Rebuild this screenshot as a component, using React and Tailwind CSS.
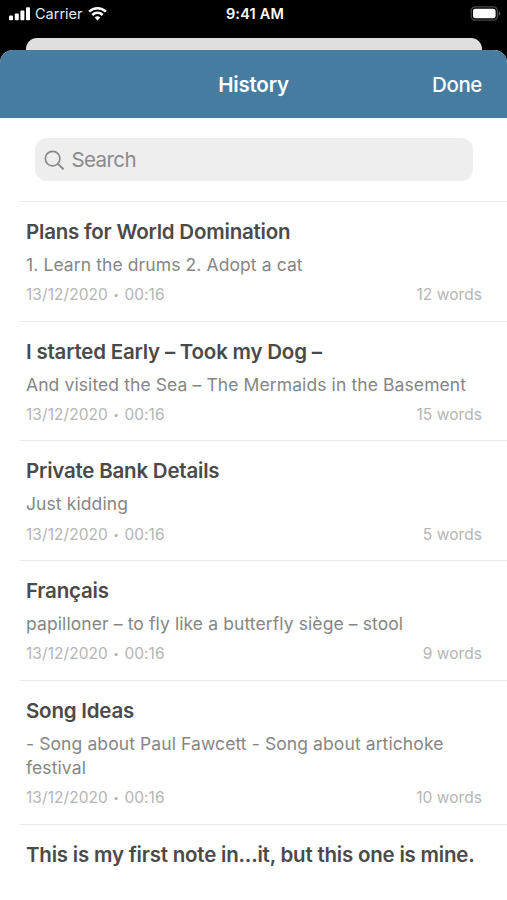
const notes = [
  {
    title: 'Plans for World Domination',
    body: '1. Learn the drums 2. Adopt a cat',
    words: 12,
  },
  {
    title: 'I started Early – Took my Dog –',
    body: 'And visited the Sea – The Mermaids in the Basement',
    words: 15,
  },
  { title: 'Private Bank Details', body: 'Just kidding', words: 5 },
  {
    title: 'Français',
    body: 'papilloner – to fly like a butterfly siège – stool',
    words: 9,
  },
  {
    title: 'Song Ideas',
    body: '- Song about Paul Fawcett - Song about artichoke festival',
    words: 10,
  },
  { title: 'This is my first note in...it, but this one is mine.' },
];

const StatusBar = () => (
  <div className="grid grid-cols-3 items-center h-[27px] pl-[9px] pr-[6px] text-white">
    <div className="flex items-center">
      <svg width="22" height="14" viewBox="0 0 22 14" fill="currentColor">
        <rect x="0" y="8.6" width="4" height="4.6" rx="1" />
        <rect x="5.8" y="6.5" width="4" height="6.7" rx="1" />
        <rect x="11.4" y="3.4" width="4" height="9.8" rx="1" />
        <rect x="17" y="0.2" width="4" height="13" rx="1" />
      </svg>
      <span className="ml-1 text-[14.5px] tracking-[0px] text-gray-200">Carrier</span>
      <svg className="ml-[5px]" width="19" height="14" viewBox="0 0 19 14" fill="none" stroke="currentColor" strokeWidth="2.5">
        <path d="M1.1 4.7a12 12 0 0 1 16.8 0" />
        <path d="M4.3 8a7.4 7.4 0 0 1 10.4 0" />
        <path d="M9.5 13.4 6.7 10.6a4 4 0 0 1 5.6 0Z" fill="currentColor" stroke="none" />
      </svg>
    </div>
    <span className="text-center text-[14.5px] font-semibold tracking-[0.2px]">9:41 AM</span>
    <svg className="justify-self-end" width="31" height="15" viewBox="0 0 31 15">
      <rect x="1.2" y="0.9" width="26.2" height="13.2" rx="4" fill="none" stroke="#48484a" strokeWidth="1.3" />
      <rect x="3" y="2.7" width="22.6" height="9.6" rx="2.2" fill="#fff" />
      <path d="M28.8 5.2v4.6c1-.4 1.6-1.3 1.6-2.3s-.6-1.9-1.6-2.3Z" fill="#5c5c5e" />
    </svg>
  </div>
);

const NoteRow = ({ note }) => (
  <li className="ml-5 border-t border-[#e9e9e9] pl-[6px] pr-[25px] pt-4 pb-[15.4px]">
    <h2 className="text-[20.5px] leading-7 font-semibold tracking-[-0.21px] text-[#4a4a4a] whitespace-nowrap">
      {note.title}
    </h2>
    {note.body && (
      <>
        <p className="mt-[7px] text-[17.5px] leading-[24.3px] tracking-[0.1px] text-[#868686]">{note.body}</p>
        <div className="mt-2 flex justify-between text-[15.5px] leading-5 tracking-[0.06px] text-[#b5b5b5]">
          <div className="flex">
            <span>13/12/2020</span>
            <span className="w-[16.5px] text-center text-[10px] leading-[18px]">•</span>
            <span>00:16</span>
          </div>
          <span>{note.words} words</span>
        </div>
      </>
    )}
  </li>
);

const App = () => (
  <div className="h-[900px] w-[507px] overflow-hidden bg-black font-['Inter',sans-serif]">
    <StatusBar />
    {/* edge of the screen behind the sheet */}
    <div className="mt-[11px] ml-[26px] mr-[25px] h-3 rounded-t-[11px] bg-[#dfdfdf]" />
    <div className="h-[850px] overflow-hidden rounded-t-[13px] bg-white">
      <header className="grid grid-cols-3 items-center h-[68px] pt-[2px] px-[25px] bg-[#467ca0] text-white">
        <h1 className="col-start-2 text-center text-[20.5px] font-semibold tracking-[-0.2px]">History</h1>
        <button className="justify-self-end text-[20.5px] font-medium tracking-[-0.4px]">Done</button>
      </header>

      <div className="mt-5 ml-[35px] mr-[34px] flex items-center h-[43px] rounded-[12px] bg-[#eeeeee] pl-[9px] pt-px text-[#8a8a8d]">
        <svg width="21" height="21" viewBox="0 0 21 21" fill="none" stroke="currentColor" strokeWidth="1.7" strokeLinecap="round">
          <circle cx="8.6" cy="8.6" r="7.3" />
          <path d="m13.9 13.9 5.1 4.9" strokeWidth="2" />
        </svg>
        <span className="ml-[6.5px] pt-px text-[20.5px] tracking-[-0.6px]">Search</span>
      </div>

      <ul className="mt-5">
        {notes.map((note) => (
          <NoteRow key={note.title} note={note} />
        ))}
      </ul>
    </div>
  </div>
);

export default App;
